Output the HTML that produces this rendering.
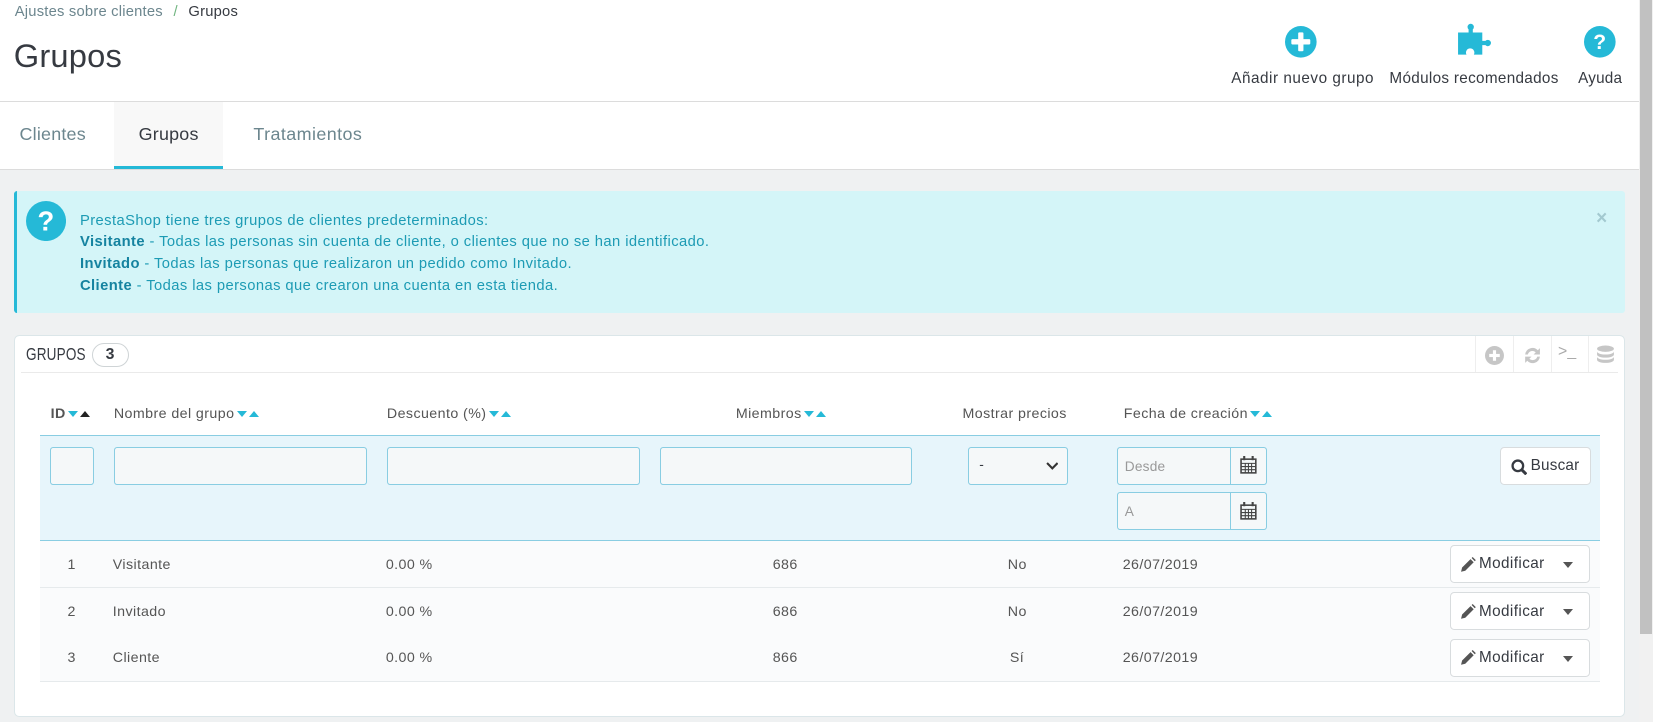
<!DOCTYPE html>
<html><head><meta charset="utf-8">
<style>
html{zoom:1.0542}
*{box-sizing:border-box;margin:0;padding:0}
body{width:1568px;height:685px;overflow:hidden;background:#eff1f2;font-family:"Liberation Sans",sans-serif;color:#363a41;position:relative;letter-spacing:.2px}
.abs{position:absolute}
.hdr{left:0;top:0;width:1555px;height:97px;background:#fff;border-bottom:1px solid #dcdcdc}
.tabs{left:0;top:97px;width:1555px;height:64px;background:#fff;border-bottom:1px solid #dcdcdc}
.tab{position:absolute;top:0;height:63px;line-height:62px;font-size:17px;color:#6c868e;text-align:center}
.sb{left:1555px;top:0;width:13px;height:685px;background:#f1f1f1}
.sb div{position:absolute;left:1px;top:0;width:11px;height:601px;background:#c1c1c1}
.alert{left:13px;top:181px;width:1528px;height:116px;background:#d4f5f8;border-left:3px solid #25b9d7;border-radius:3px;color:#1d9bb4;font-size:14px;letter-spacing:.4px;line-height:20.5px;padding:19px 0 0 60px}
.alert b{color:#1583a0}
.card{left:13px;top:318px;width:1528px;height:362px;background:#fff;border:1px solid #dbe6e9;border-radius:5px}
.th{position:absolute;top:385px;font-size:13.5px;color:#555;letter-spacing:.4px}
.car{display:inline-block;width:0;height:0;border-left:5px solid transparent;border-right:5px solid transparent;vertical-align:middle;margin-left:2px}
.dn{border-top:6px solid #25b9d7}.up{border-bottom:6px solid #25b9d7}
.inp{position:absolute;height:36px;background:#f5f8f9;border:1px solid #89cde2;border-radius:3px}
.row{position:absolute;left:38px;width:1480px;height:45px;border-bottom:1px solid #e6eaec;background:#fafbfc;font-size:13.5px;color:#555;letter-spacing:.4px}
.row span{position:absolute;top:15px}
.btn{position:absolute;right:10px;top:4px;width:133px;height:36px;background:#fff;border:1px solid #d8dcde;border-radius:4px;font-size:14.5px;color:#363a41}
</style></head><body>
<div class="abs hdr">
 <div class="abs" style="left:14px;top:4px;font-size:14px;color:#6c868e">Ajustes sobre clientes <span style="color:#70b580;margin:0 6px">/</span> <span style="color:#363a41">Grupos</span></div>
 <div class="abs" style="left:13px;top:35px;font-size:31px;color:#363a41">Grupos</div>
 <svg class="abs" style="left:1219px;top:25px" width="30" height="30" viewBox="0 0 30 30"><circle cx="15" cy="15" r="15" fill="#25b9d7"/><rect x="12.5" y="6" width="5" height="18" rx="1" fill="#fff"/><rect x="6" y="12.5" width="18" height="5" rx="1" fill="#fff"/></svg>
 <svg class="abs" style="left:1382px;top:22px" width="34" height="32" viewBox="0 0 34 32"><path d="M1 9h10v-3a3 3 0 1 1 4 0v3h9v8h3a3 3 0 1 1 0 4h-3v9h-8a4 4 0 1 0-7 0H1z" fill="#25b9d7"/></svg>
 <svg class="abs" style="left:1503px;top:25px" width="30" height="30" viewBox="0 0 30 30"><circle cx="15" cy="15" r="15" fill="#25b9d7"/><text x="15" y="22" text-anchor="middle" font-family="Liberation Sans" font-weight="bold" font-size="20" fill="#fff">?</text></svg>
 <div class="abs" style="left:1168px;top:66px;font-size:14.5px;letter-spacing:.5px">Añadir nuevo grupo</div>
 <div class="abs" style="left:1318px;top:66px;font-size:14.5px;letter-spacing:.3px">Módulos recomendados</div>
 <div class="abs" style="left:1497px;top:66px;font-size:14.5px">Ayuda</div>
</div>
<div class="abs tabs">
 <div class="tab" style="left:0;width:100px">Clientes</div>
 <div class="tab" style="left:108px;width:104px;color:#363a41;background:#f8f8f8;border-bottom:3px solid #25b9d7">Grupos</div>
 <div class="tab" style="left:222px;width:140px;letter-spacing:.4px">Tratamientos</div>
</div>
<div class="abs sb"><div></div></div>
<div class="abs alert">
 <svg class="abs" style="left:9px;top:10px" width="38" height="38" viewBox="0 0 38 38"><circle cx="19" cy="19" r="19" fill="#25b9d7"/><text x="19" y="28" text-anchor="middle" font-family="Liberation Sans" font-weight="bold" font-size="26" fill="#fff">?</text></svg>
 <div style="position:absolute;right:16px;top:16px;color:#a3c9d0;font-size:18px;font-weight:bold">×</div>
 PrestaShop tiene tres grupos de clientes predeterminados:<br>
 <b>Visitante</b> - Todas las personas sin cuenta de cliente, o clientes que no se han identificado.<br>
 <b>Invitado</b> - Todas las personas que realizaron un pedido como Invitado.<br>
 <b>Cliente</b> - Todas las personas que crearon una cuenta en esta tienda.
</div>
<div class="abs card">
 <div class="abs" style="left:11px;top:7px;font-size:16.5px;color:#363a41;transform:scaleX(.78);transform-origin:left">GRUPOS</div>
 <div class="abs" style="left:73px;top:6px;width:35px;height:23px;border:1px solid #cfd4d6;border-radius:12px;text-align:center;font-size:15px;font-weight:bold;line-height:21px">3</div>
 <div class="abs" style="left:6px;top:34px;width:1515px;height:1px;background:#eaeaea"></div>
 <div class="abs" style="left:1385px;top:0;width:142px;height:34px;border-left:1px solid #eee">
  <svg class="abs" style="left:9px;top:9px" width="18" height="18"><circle cx="9" cy="9" r="9" fill="#c6c6c6"/><rect x="7.5" y="4" width="3" height="10" fill="#fff"/><rect x="4" y="7.5" width="10" height="3" fill="#fff"/></svg>
  <div class="abs" style="left:35px;top:0;width:1px;height:34px;background:#eee"></div>
  <svg class="abs" style="left:44px;top:8px" width="20" height="20" viewBox="0 0 20 20"><path d="M3 9a7 7 0 0 1 12-4l2-2v6h-6l2-2a4.5 4.5 0 0 0-7.5 2zM17 11a7 7 0 0 1-12 4l-2 2v-6h6l-2 2a4.5 4.5 0 0 0 7.5-2z" fill="#c6c6c6"/></svg>
  <div class="abs" style="left:71px;top:0;width:1px;height:34px;background:#eee"></div>
  <div class="abs" style="left:78px;top:6px;font-size:15px;color:#aaa">&gt;_</div>
  <div class="abs" style="left:106px;top:0;width:1px;height:34px;background:#eee"></div>
  <svg class="abs" style="left:114px;top:8px" width="18" height="20" viewBox="0 0 18 20"><ellipse cx="9" cy="3.5" rx="8" ry="3" fill="#c6c6c6"/><path d="M1 6c0 4 16 4 16 0v3c0 4-16 4-16 0zM1 11c0 4 16 4 16 0v3c0 4-16 4-16 0z" fill="#c6c6c6"/></svg>
 </div>
</div>
<div class="th" style="left:48px;font-weight:bold">ID<span class="car dn"></span><span class="car" style="border-bottom:6px solid #222"></span></div>
<div class="th" style="left:108px">Nombre del grupo<span class="car dn"></span><span class="car up"></span></div>
<div class="th" style="left:367px">Descuento (%)<span class="car dn"></span><span class="car up"></span></div>
<div class="th" style="left:698px">Miembros<span class="car dn"></span><span class="car up"></span></div>
<div class="th" style="left:913px">Mostrar precios</div>
<div class="th" style="left:1066px">Fecha de creación<span class="car dn"></span><span class="car up"></span></div>
<div class="abs" style="left:38px;top:413px;width:1480px;height:100px;background:#e7f5fb;border-top:1px solid #89cde2;border-bottom:1px solid #89cde2"></div>
<div class="inp" style="left:47px;top:424px;width:42px"></div>
<div class="inp" style="left:108px;top:424px;width:240px"></div>
<div class="inp" style="left:367px;top:424px;width:240px"></div>
<div class="inp" style="left:626px;top:424px;width:239px"></div>
<div class="inp" style="left:918px;top:424px;width:95px;font-size:13px;padding:9px 10px">-<svg style="position:absolute;right:8px;top:13px" width="12" height="8"><path d="M1 1l5 5 5-5" stroke="#333" stroke-width="2" fill="none"/></svg></div>
<div class="inp" style="left:1060px;top:424px;width:142px;font-size:13px;color:#999;padding:10px 6px">Desde<div style="position:absolute;left:106px;top:0;width:1px;height:34px;background:#89cde2"></div><svg style="position:absolute;left:115px;top:8px" width="16" height="17"><rect x="1" y="3" width="14" height="13" fill="none" stroke="#444" stroke-width="1.5"/><path d="M1 7h14M5 7v9M8 7v9M11 7v9M1 10h14M1 13h14" stroke="#444"/><rect x="3" y="0" width="2" height="4" fill="#444"/><rect x="11" y="0" width="2" height="4" fill="#444"/></svg></div>
<div class="inp" style="left:1060px;top:467px;width:142px;font-size:13px;color:#999;padding:10px 6px">A<div style="position:absolute;left:106px;top:0;width:1px;height:34px;background:#89cde2"></div><svg style="position:absolute;left:115px;top:8px" width="16" height="17"><rect x="1" y="3" width="14" height="13" fill="none" stroke="#444" stroke-width="1.5"/><path d="M1 7h14M5 7v9M8 7v9M11 7v9M1 10h14M1 13h14" stroke="#444"/><rect x="3" y="0" width="2" height="4" fill="#444"/><rect x="11" y="0" width="2" height="4" fill="#444"/></svg></div>
<div class="abs" style="left:1423px;top:424px;width:86px;height:36px;background:#fff;border:1px solid #d8dcde;border-radius:4px;font-size:14.5px;padding:9px 0 0 28px">Buscar<svg style="position:absolute;left:9px;top:10px" width="16" height="16"><circle cx="6.5" cy="6.5" r="5" fill="none" stroke="#363a41" stroke-width="2.2"/><path d="M10 10l4.5 4.5" stroke="#363a41" stroke-width="2.8"/></svg></div>
<div class="row" style="top:513px"><span style="left:26px">1</span><span style="left:69px">Visitante</span><span style="left:328px">0.00 %</span><span style="left:695px">686</span><span style="left:918px">No</span><span style="left:1027px">26/07/2019</span><div class="btn"><svg style="position:absolute;left:9px;top:10px" width="15" height="15"><path d="M1 14l1-4 8-8 3 3-8 8zM11 1l1-1 3 3-1 1z" fill="#555"/></svg><span style="left:27px;top:9px">Modificar</span><span style="left:107px;top:15px;border-left:5px solid transparent;border-right:5px solid transparent;border-top:6px solid #555"></span></div></div>
<div class="row" style="top:558px"><span style="left:26px">2</span><span style="left:69px">Invitado</span><span style="left:328px">0.00 %</span><span style="left:695px">686</span><span style="left:918px">No</span><span style="left:1027px">26/07/2019</span><div class="btn"><svg style="position:absolute;left:9px;top:10px" width="15" height="15"><path d="M1 14l1-4 8-8 3 3-8 8zM11 1l1-1 3 3-1 1z" fill="#555"/></svg><span style="left:27px;top:9px">Modificar</span><span style="left:107px;top:15px;border-left:5px solid transparent;border-right:5px solid transparent;border-top:6px solid #555"></span></div></div>
<div class="row" style="top:602px"><span style="left:26px">3</span><span style="left:69px">Cliente</span><span style="left:328px">0.00 %</span><span style="left:695px">866</span><span style="left:920px">Sí</span><span style="left:1027px">26/07/2019</span><div class="btn"><svg style="position:absolute;left:9px;top:10px" width="15" height="15"><path d="M1 14l1-4 8-8 3 3-8 8zM11 1l1-1 3 3-1 1z" fill="#555"/></svg><span style="left:27px;top:9px">Modificar</span><span style="left:107px;top:15px;border-left:5px solid transparent;border-right:5px solid transparent;border-top:6px solid #555"></span></div></div>
</body></html>
